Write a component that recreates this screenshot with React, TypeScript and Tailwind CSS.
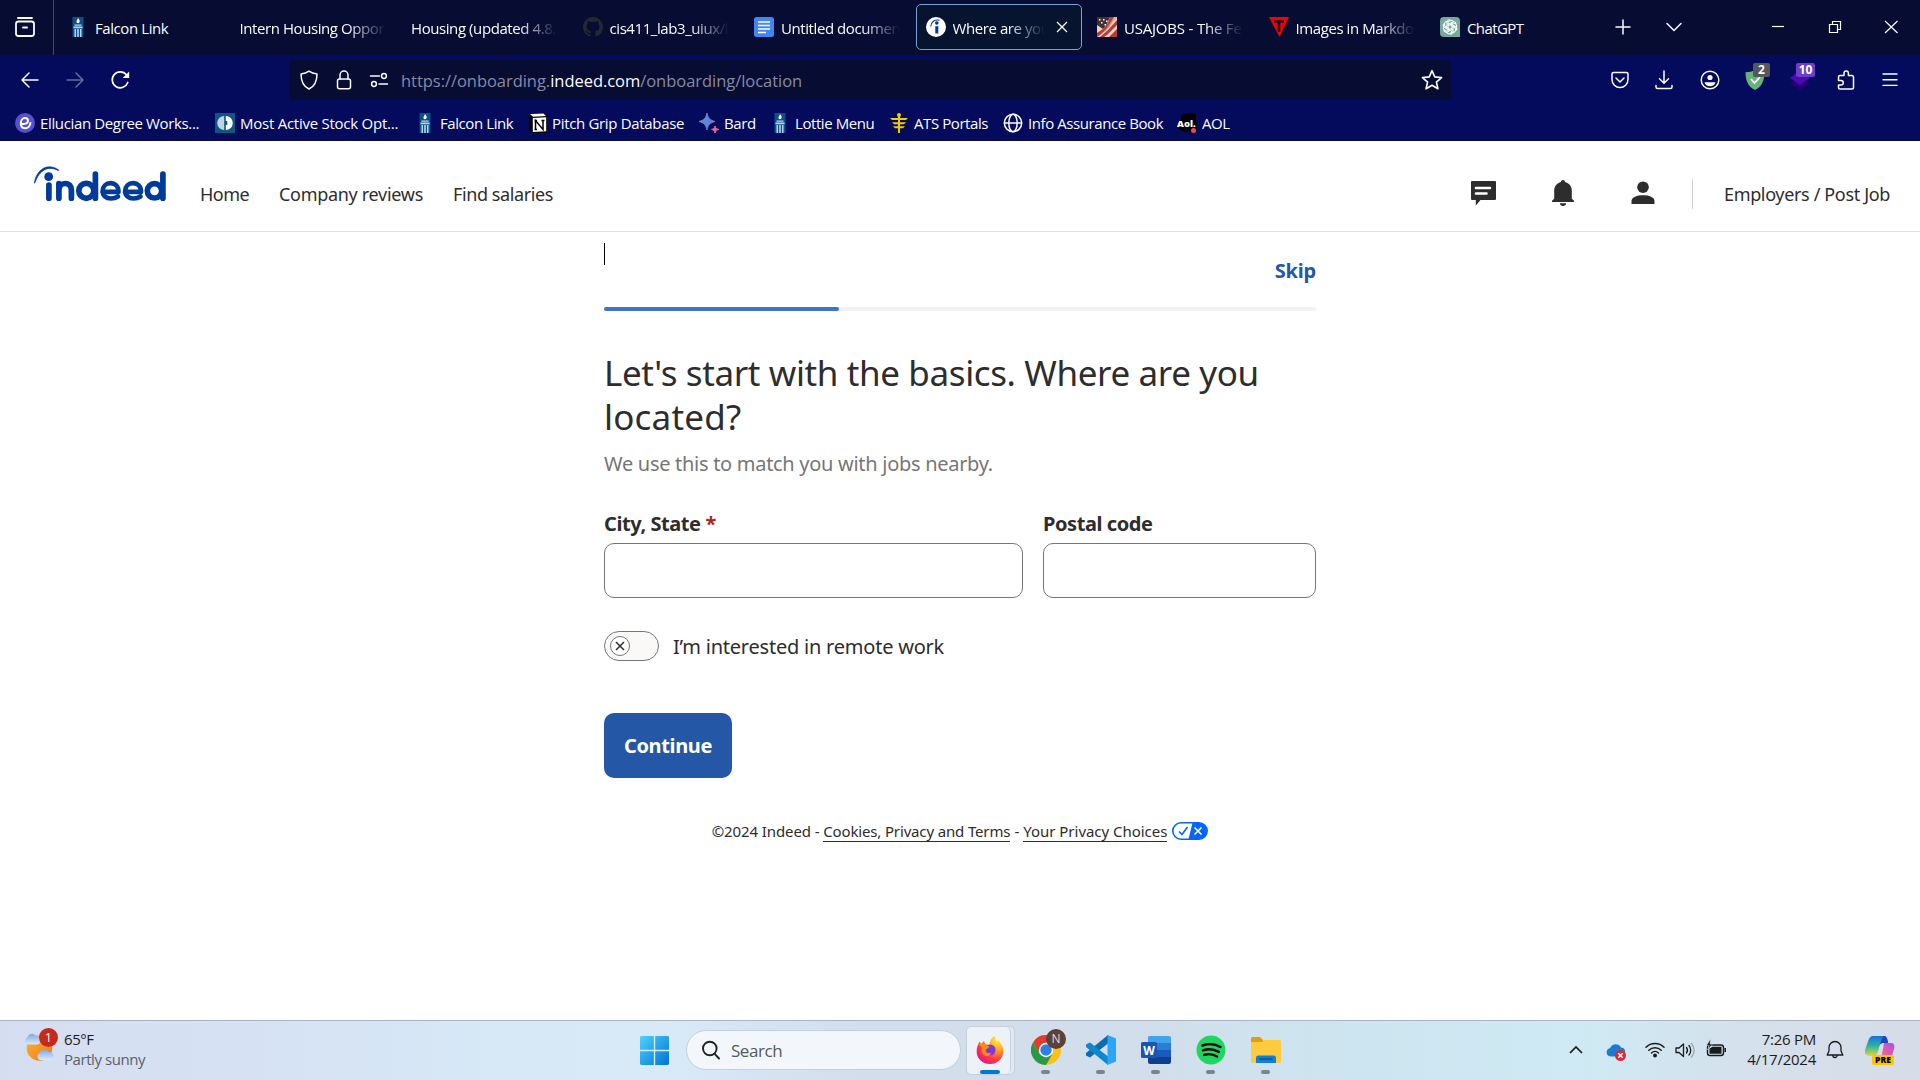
import React from "react";

const SEGOE = "font-['Open_Sans',sans-serif]";

function T({ className = "", children }: { className?: string; children: React.ReactNode }) {
  return <span className={"whitespace-nowrap " + className}>{children}</span>;
}

const Torch = () => (
  <svg viewBox="0 0 20 20" className="size-5 shrink-0">
    <rect x="4.500" width="11" height="20" fill="#0d4f8b" />
    <path d="M10 1c1.600 2 2 3 1.500 4.300-.8 1.200-2.400 1.200-3 0C8 4 9.500 3 10 1z" fill="#fff" />
    <path d="M6.500 7.500h7v1.300h-7zM5.500 9.600h9v1.600h-9zM6.500 12H8v8H6.500zM9.200 12h1.600v8H9.200zM12 12h1.500v8H12z" fill="#b9d4ea" />
  </svg>
);
const Github = () => (
  <svg viewBox="0 0 16 16" className="size-5 shrink-0" fill="#24292f">
    <path d="M8 0C3.580 0 0 3.580 0 8c0 3.540 2.290 6.530 5.470 7.590.4.070.55-.17.55-.38 0-.19-.01-.82-.01-1.490-2.010.37-2.530-.49-2.690-.94-.09-.23-.48-.94-.82-1.130-.28-.15-.68-.52-.01-.53.63-.01 1.080.58 1.230.82.72 1.210 1.870.87 2.330.66.07-.52.28-.87.51-1.070-1.780-.2-3.640-.89-3.640-3.950 0-.87.31-1.590.82-2.150-.08-.2-.36-1.020.08-2.120 0 0 .67-.21 2.200.82.64-.18 1.320-.27 2-.27s1.360.09 2 .27c1.530-1.040 2.200-.82 2.200-.82.44 1.100.16 1.920.08 2.120.51.56.82 1.270.82 2.150 0 3.070-1.870 3.750-3.650 3.950.29.25.54.73.54 1.480 0 1.070-.01 1.930-.01 2.200 0 .21.15.46.55.38A8.010 8.010 0 0 0 16 8c0-4.420-3.580-8-8-8z" />
  </svg>
);
const Docs = () => (
  <svg viewBox="0 0 20 20" className="size-5 shrink-0">
    <rect width="20" height="20" rx="2.500" fill="#4285f4" />
    <path d="M4 5h12M4 8.500h12M4 12h12M4 15.500h8" stroke="#fff" strokeWidth="1.700" />
  </svg>
);
const IndeedFav = () => (
  <svg viewBox="0 0 20 20" className="size-5 shrink-0">
    <circle cx="10" cy="10" r="10" fill="#fff" />
    <circle cx="10.800" cy="6" r="1.800" fill="#003a9b" />
    <path d="M9.300 9.200c1 .3 2 .2 3-.3V16.500H9.300z" fill="#003a9b" />
    <path d="M4.800 9.500C5 5 8.500 2 13.500 3.300" stroke="#003a9b" strokeWidth="1.100" fill="none" />
  </svg>
);
const Usa = () => (
  <svg viewBox="0 0 20 20" className="size-5 shrink-0">
    <rect width="20" height="20" fill="#ecd5bd" />
    <path d="M0 0h13l-3 7-4 5-6-4z" fill="#453034" />
    <path d="M13 0h4l-5 10-9 8-3 2v-4l6-4 5-6zM20 3v5L10 18l-3 2H3l8-7zM20 12v8h-8z" fill="#b8383d" />
    <path d="M17 0h3L9 14l-3 2z" fill="#c99c87" opacity=".7" />
    <path d="M2 2h1.500v1.500H2zM6 2h1.500v1.500H6zM4 5h1.500v1.500H4zM9 3.500h1.500V5H9zM7.500 7H9v1.500H7.500z" fill="#fff" />
  </svg>
);
const Tutorials = () => (
  <svg viewBox="0 0 20 20" className="size-5 shrink-0">
    <path d="M0 0h20l-9.500 20z" fill="#f50000" />
    <path d="M5 3.200h10v2.600h-3.700V15H8.700V5.800H5z" fill="#160a2c" />
  </svg>
);
const ChatGPT = () => (
  <svg viewBox="0 0 20 20" className="size-5 shrink-0">
    <path d="M4 0h12a4 4 0 0 1 4 4v16H4a4 4 0 0 1-4-4V4a4 4 0 0 1 4-4z" fill="#74aa9c" />
    <g stroke="#fff" strokeWidth="1.050" fill="none">
      {[0, 60, 120, 180, 240, 300].map((a) => (
        <path key={a} transform={`rotate(${a} 10 10)`} d="M8 11.200V6.300a3 3 0 0 1 5.500-1.600M8 7.600l4.200-2.400a3 3 0 0 1 4 1.200" />
      ))}
    </g>
  </svg>
);

function Tab({ icon, children, active }: { icon?: React.ReactNode; children: React.ReactNode; active?: boolean }) {
  return (
    <div className={"flex h-[46px] w-[166px] shrink-0 items-center gap-[7px] rounded-[5px] border px-[9px] " + (active ? "border-[#7f9edb] bg-[#07142f]" : "border-transparent")}>
      {icon}
      <div className="min-w-0 flex-1 pt-px text-[15px] leading-[22px] tracking-[-0.42px] text-[#fbfbfe]">{children}</div>
      {active && (
        <svg viewBox="0 0 20 20" className="size-5 shrink-0" stroke="#fbfbfe" strokeWidth="1.300"><path d="M5 5l10 10M15 5L5 15" /></svg>
      )}
    </div>
  );
}
const FADE = "block [mask-image:linear-gradient(to_right,#000_calc(100%-38px),transparent)]";

const Ico = ({ children, className = "size-5" }: { children: React.ReactNode; className?: string }) => (
  <svg viewBox="0 0 20 20" className={"shrink-0 " + className} fill="none" stroke="#fbfbfe" strokeWidth="1.500" strokeLinecap="round" strokeLinejoin="round">{children}</svg>
);

function Browser() {
  return (
    <div className={"flex h-[141px] flex-col border-b border-[#0a0d3a] bg-[#040b5c] " + SEGOE}>
      <div className="flex h-[55px] items-center bg-[#070c32]">
        <div className="flex h-full w-[54px] items-center border-r border-[#474a66] pl-[14px]">
          <svg viewBox="0 0 22 22" className="size-[22px]" fill="none" stroke="#fbfbfe" strokeWidth="1.800" strokeLinecap="round"><path d="M4 2h14" /><rect x="2" y="5.500" width="18" height="14.500" rx="2.500" /><path d="M9 11.500h4" /></svg>
        </div>
        <div className="ml-1 flex gap-[5.500px]">
          <Tab icon={<Torch />}><T>Falcon Link</T></Tab>
          <Tab><div className={FADE}><T>Intern Housing Oppor</T></div></Tab>
          <Tab><div className={FADE}><T>Housing (updated 4.8.</T></div></Tab>
          <Tab icon={<Github />}><div className={FADE}><T>cis411_lab3_uiux/l</T></div></Tab>
          <Tab icon={<Docs />}><div className={FADE}><T>Untitled documen</T></div></Tab>
          <Tab icon={<IndeedFav />} active><div className={FADE}><T>Where are you</T></div></Tab>
          <Tab icon={<Usa />}><div className={FADE}><T className="tracking-[-0.2px]">USAJOBS - The Fe</T></div></Tab>
          <Tab icon={<Tutorials />}><div className={FADE}><T>Images in Markdo</T></div></Tab>
          <Tab icon={<ChatGPT />}><T className="tracking-[-0.6px]">ChatGPT</T></Tab>
        </div>
        <div className="ml-auto flex items-center">
          <Ico className="mr-[31px] size-5"><path d="M10 3v14M3 10h14" /></Ico>
          <Ico className="mr-[84px] size-5"><path d="M3 6.500l7 7 7-7" /></Ico>
          <svg viewBox="0 0 20 20" className="mr-[37px] size-5" fill="none" stroke="#fff" strokeWidth="1.200"><path d="M4 9.500h12" /></svg>
          <svg viewBox="0 0 20 20" className="mr-[36px] size-5" fill="none" stroke="#fff" strokeWidth="1.200"><path d="M4.500 7.500h8v8h-8zM7.500 7.500v-3h8v8h-3" /></svg>
          <svg viewBox="0 0 20 20" className="mr-[19px] size-5" fill="none" stroke="#fff" strokeWidth="1.200"><path d="M4 4l12.500 12M16.500 4L4 16" /></svg>
        </div>
      </div>

      <div className="flex h-[51px] items-center pl-5 pt-px">
        <Ico className="size-5"><path d="M18 10H2M9 3l-7 7 7 7" /></Ico>
        <Ico className="ml-[25px] size-5 opacity-40"><path d="M2 10h16M11 3l7 7-7 7" /></Ico>
        <svg viewBox="0 0 20 20" className="ml-[25px] size-5" fill="none" stroke="#fbfbfe" strokeWidth="1.700" strokeLinecap="round"><path d="M17.800 12.500A8 8 0 1 1 16.500 4.800" /><path d="M19.200 1.500v6.500h-6.500z" fill="#fbfbfe" stroke="none" /></svg>
        <div className="mb-px ml-[159px] flex h-[40px] w-[1162px] items-center rounded-[5px] bg-[#070c32] pl-[10px] pr-[8px]">
          <Ico><path d="M10 1.200c2.500 1.800 5 2.500 8 2.800 0 7-2.500 12.500-8 15-5.500-2.500-8-8-8-15 3-.3 5.500-1 8-2.800z" /></Ico>
          <Ico className="ml-[15px] size-5"><rect x="3.500" y="9" width="13" height="9.700" rx="2" /><path d="M6 9V5a4 4 0 0 1 8 0v4" /></Ico>
          <Ico className="ml-[15px] size-5"><path d="M1.500 6h9M10 14h8.500" /><circle cx="15" cy="6" r="2.400" /><circle cx="5" cy="14" r="2.400" /></Ico>
          <T className="ml-[12px] pt-[3px] text-[16.500px] tracking-[-0.04px] text-[#868aa3]">https://onboarding.<span className="text-[#fbfbfe]">indeed.com</span>/onboarding/location</T>
          <Ico className="ml-auto size-[22px]"><path d="M10 1.500l2.500 5.700 6.200.6-4.700 4.100 1.400 6.100L10 14.800 4.600 18 6 11.900 1.300 7.800l6.200-.6z" /></Ico>
        </div>
        <Ico className="ml-[159px] size-5"><path d="M3.500 2.500h13a1.500 1.500 0 0 1 1.500 1.500v5.500a8 8 0 0 1-16 0V4a1.500 1.500 0 0 1 1.500-1.500zM6 8l4 4 4-4" /></Ico>
        <Ico className="ml-[24px] size-5"><path d="M10 1v12M5.500 8.800L10 13.200l4.500-4.400M2 15.500v1.500a1.500 1.500 0 0 0 1.500 1.500h13A1.500 1.500 0 0 0 18 17v-1.500" /></Ico>
        <Ico className="ml-[26px] size-5"><circle cx="10" cy="10" r="8.800" /><circle cx="10" cy="7.500" r="2.600" fill="#fbfbfe" stroke="none" /><path d="M4.500 12.300h11c-.6 2.700-3 4-5.500 4s-5-1.300-5.500-4z" fill="#fbfbfe" stroke="none" /></Ico>
        <div className="relative ml-[25px] size-5">
          <svg viewBox="0 0 20 20" className="size-5"><path d="M10 0c2.800 1.500 6 2.200 9.500 2.200C19.500 11 16.500 17 10 20 3.500 17 .5 11 .5 2.200 4 2.200 7.200 1.500 10 0z" fill="#67b279" /><path d="M6 9l3.500 4L15 7" stroke="#fff" strokeWidth="1.800" fill="none" /></svg>
          <div className="absolute left-[8px] top-[-7px] flex h-[14px] w-[17px] items-center justify-center rounded-[2px] bg-[#55585a] text-[12px] font-bold text-white">2</div>
        </div>
        <div className="relative ml-[25px] size-5">
          <svg viewBox="0 0 20 20" className="size-5"><path d="M10 6l10 7.500-10 6.500L0 13.500z" fill="#250078" /><path d="M10 0l10 8-10 7L0 8z" fill="#4a0ab5" /></svg>
          <div className="absolute left-[6px] top-[-7px] flex h-[14px] w-[19px] items-center justify-center rounded-[2px] bg-[#6f3ec4] text-[12px] font-bold text-white">10</div>
        </div>
        <Ico className="ml-[26px] size-5"><path d="M2.500 8.500V7A1.500 1.500 0 0 1 4 5.500h4V3.300a2.200 2.200 0 0 1 4.400 0v2.200h3.400A1.700 1.700 0 0 1 17.500 7v10.500A1.500 1.500 0 0 1 16 19H4a1.500 1.500 0 0 1-1.500-1.500V15H5a2 2 0 0 0 0-4.500H2.500z" /></Ico>
        <Ico className="ml-[24px] size-5"><path d="M3 4h14M3 9.700h14M3 15.400h14" strokeWidth="1.400" /></Ico>
      </div>

      <div className="flex h-[35px] items-center pl-[15px] text-[15px] tracking-[-0.42px] text-[#fbfbfe] [&>span]:pt-px">
        <svg viewBox="0 0 20 20" className="mr-[5px] size-5"><circle cx="10" cy="10" r="10" fill="#5551cf" /><path d="M6.500 11c4 .5 6.500-1 6.500-3.300C13 5.800 11.500 5 10 5c-2.500 0-4.200 2.500-4.200 5.300 0 3 1.700 4.900 4.200 4.900 3 0 5.400-2.400 5.400-6" stroke="#fff" strokeWidth="2" fill="none" /></svg>
        <T className="w-[159px] tracking-[-0.36px]">Ellucian Degree Works...</T>
        <svg viewBox="0 0 20 20" className="ml-4 mr-[5px] size-5"><rect width="20" height="20" fill="#0f5687" /><path d="M9.200 3a7 7 0 0 0 0 14z" fill="#bcd6e6" /><path d="M10.800 3a7 7 0 0 1 0 14V12h1.500V8h-1.500z" fill="#fff" /></svg>
        <T className="w-[158px] tracking-[-0.25px]">Most Active Stock Opt...</T>
        <span className="ml-[17px] mr-[5px]"><Torch /></span>
        <T className="w-[73px]">Falcon Link</T>
        <svg viewBox="0 0 20 20" className="ml-[15px] mr-[4px] size-5"><path d="M2 0h14l3 3v17H5l-4-4V1z" fill="#000" /><path d="M2 1l13.500-.5L18 3 5 3.800zM4.800 5l13.400-.8v14L4.800 19z" fill="#fff" /><path d="M7.500 16.500v-9l7.500 9v-9M6.500 7.500h2.500M13.500 7.500h3M6.500 16.500h2.500" stroke="#000" strokeWidth="1.500" fill="none" /></svg>
        <T className="w-[132px] tracking-[-0.33px]">Pitch Grip Database</T>
        <svg viewBox="0 0 20 20" className="ml-[15px] mr-[5px] size-5"><defs><linearGradient id="bd" x1="0" x2="1" y1="0" y2=".4"><stop offset="0" stopColor="#d96570" /><stop offset=".55" stopColor="#4a8fe0" /><stop offset="1" stopColor="#9168c0" /></linearGradient></defs><path d="M8 0c1 5 3 7.200 8 8.500-5 1.300-7 3.500-8 8.500-1-5-3-7.200-8-8.500C5 7.200 7 5 8 0z" fill="url(#bd)" stroke="url(#bd)" strokeWidth="1" /><path d="M16 13c.5 2 1.500 3 4 3.500-2.500.5-3.500 1.500-4 3.500-.5-2-1.500-3-3.500-3.500 2-.5 3-1.500 3.500-3.500z" fill="#d96590" stroke="#d96590" /></svg>
        <T className="w-[31px]">Bard</T>
        <span className="ml-[15px] mr-[5px]"><Torch /></span>
        <T className="w-[79px]">Lottie Menu</T>
        <svg viewBox="0 0 20 20" className="ml-[15px] mr-[5px] size-5" fill="#f2cb05"><path d="M9 3h2v17H9zM1 5h18l-2 2H3zM3 9.200h14l-2 2H5zM4 13.200h12l-2 2H6z" /><circle cx="10" cy="2" r="2" /></svg>
        <T className="w-[73px]">ATS Portals</T>
        <svg viewBox="0 0 20 20" className="ml-[16px] mr-[5px] size-5" fill="none" stroke="#fbfbfe" strokeWidth="1.500"><circle cx="10" cy="10" r="8.700" /><ellipse cx="10" cy="10" rx="4.200" ry="8.700" /><path d="M1.300 10h17.400" /></svg>
        <T className="w-[134px]">Info Assurance Book</T>
        <svg viewBox="0 0 20 20" className="ml-[15px] mr-[5px] size-5 tracking-normal"><path d="M5 1.500L18.500 0 20 17 9 19.500 1.500 16z" fill="#000" /><circle cx="16.500" cy="17.500" r="2.500" fill="#f5484f" /><text x="0" y="13.500" fontSize="9.500" fontWeight="800" fill="#fff">Aol.</text></svg>
        <T className="w-[28px]">AOL</T>
      </div>
    </div>
  );
}

function SiteHeader() {
  return (
    <header className="flex h-[91px] items-start border-b border-[#e1e1e1] pl-[33px] text-[18px] leading-6 text-[#2d2d2d]">
      <svg viewBox="0 0 134 38" className="mt-[23px] h-[38px] w-[134px]" role="img" aria-label="indeed">
        <g fill="none" stroke="#003a9b" strokeWidth="5.700" strokeLinecap="round">
          <path d="M15.900 21V34.200" />
          <path d="M25.900 34.200V19.500M25.900 26.500c0-4.800 2.600-7 6.200-7s6.300 2.200 6.300 6.500v8.200" />
          <circle cx="53.300" cy="26.800" r="7.500" />
          <path d="M62.400 10V34.200" />
          <path d="M69.500 27.900H85.500C85.500 22 82 19.200 77.700 19.200c-4.700 0-8 3.200-8 7.800 0 4.800 3.400 7.500 8.300 7.500 2.800 0 5-.7 7-2" strokeWidth="4.700" strokeLinejoin="round" />
          <path d="M92 27.900H108C108 22 104.500 19.200 100.200 19.200c-4.700 0-8 3.200-8 7.800 0 4.800 3.400 7.500 8.300 7.500 2.800 0 5-.7 7-2" strokeWidth="4.700" strokeLinejoin="round" />
          <circle cx="121.500" cy="26.800" r="7.200" />
          <path d="M129.900 10V34.200" />
        </g>
        <circle cx="15.700" cy="12.700" r="4.400" fill="#003a9b" />
        <path d="M1.300 19C3.500 5 15-1.500 25.500 5.800c.7.600.2 1-.5.600C16 1.700 6.500 5 2 18.800z" fill="#003a9b" stroke="#003a9b" strokeWidth=".6" />
      </svg>
      <T className="ml-[33px] mt-[41px] w-[49px] tracking-[-0.55px]">Home</T>
      <T className="ml-[30px] mt-[41px] w-[144px] tracking-[-0.3px]">Company reviews</T>
      <T className="ml-[30px] mt-[41px] tracking-[-0.4px]">Find salaries</T>
      <div className="ml-auto flex">
        <svg viewBox="0 0 25 25" className="mt-[40px] h-[25px] w-[25px]"><path d="M1 0h23a1 1 0 0 1 1 1v17a1 1 0 0 1-1 1H9.500L4.800 24.500V19H1a1 1 0 0 1-1-1V1a1 1 0 0 1 1-1z" fill="#2d2d2d" /><path d="M5 7h14M5 12.500h10.500" stroke="#fff" strokeWidth="2.500" strokeLinecap="round" /></svg>
        <svg viewBox="0 0 24 26" className="ml-[55px] mt-[39px] h-[26px] w-[24px]" fill="#2d2d2d"><path d="M12 0c1.200 0 2 .8 2 1.900 4 1 6.800 4.100 6.800 8.600v8.300L23 20.800V22H1v-1.200l2.200-2V10.500C3.200 6 6 2.900 10 1.900 10 .8 10.800 0 12 0zM8.800 23.200h6.400C15 25 13.700 26 12 26s-3-1-3.200-2.800z" /></svg>
        <svg viewBox="0 0 24 24" className="ml-[56px] mt-[40px] h-6 w-6" fill="#2d2d2d"><circle cx="12" cy="6.200" r="5.800" /><path d="M.5 23v-3C.5 16 6 14.200 12 14.200s11.500 1.800 11.500 5.800v3z" /></svg>
        <div className="ml-[37px] mt-[38px] h-[30px] w-px bg-[#d0d0d0]" />
        <T className="ml-[31px] mr-[30px] mt-[41px] w-[166px] tracking-[-0.35px]">Employers / Post Job</T>
      </div>
    </header>
  );
}

function Form() {
  return (
    <main className="mx-auto w-[712px] flex-1 text-[#2d2d2d]">
      <div className="flex h-[75px] justify-between">
        <div className="mt-[11px] h-[22px] w-px bg-black" />
        <T className="mt-[25px] text-[20px] font-bold leading-[28px] tracking-[-0.2px] text-[#2557a7]">Skip</T>
      </div>
      <div className="h-1 rounded-full bg-[#f2f2f2]"><div className="h-1 w-[235px] rounded-full bg-[#3f73d3]" /></div>
      <h1 className="mt-[40px] text-[35px] leading-[44px]"><T className="tracking-[-0.38px]">Let's start with the basics. Where are you</T><br /><T className="tracking-[0.2px]">located?</T></h1>
      <p className="mt-[10px] text-[20px] leading-[30px] tracking-[-0.29px] text-[#767676]">We use this to match you with jobs nearby.</p>
      <div className="mt-[31px] flex gap-5 text-[20px] font-bold leading-[28px] tracking-[-0.43px]">
        <div>
          <div className="flex"><T>City, State</T><span className="ml-[5px] text-[#a9252b]">*</span></div>
          <div className="mt-[5px] h-[55px] w-[419px] rounded-[10px] border border-[#767676]" />
        </div>
        <div>
          <div className="flex"><T>Postal code</T></div>
          <div className="mt-[5px] h-[55px] w-[273px] rounded-[10px] border border-[#767676]" />
        </div>
      </div>
      <div className="mt-[33px] flex h-[30px] items-center">
        <div className="flex h-[30px] w-[55px] items-center rounded-full border border-[#767676] bg-[#faf9f8] pl-[5px]">
          <svg viewBox="0 0 20 20" className="size-5"><circle cx="10" cy="10" r="9.500" fill="#fff" stroke="#767676" /><path d="M6 6l8 8M14 6l-8 8" stroke="#2d2d2d" strokeWidth="1.500" /></svg>
        </div>
        <T className="ml-[14px] pt-px text-[20px] tracking-[-0.22px]">I’m interested in remote work</T>
      </div>
      <button className="mt-[52px] flex h-[65px] w-[128px] items-center justify-center rounded-[10px] bg-[#2557a7] pt-px text-[20px] font-bold tracking-[-0.37px] text-white">Continue</button>
      <footer className="mt-[41px] flex h-[24px] items-center justify-center text-[15px] leading-[20px]">
        <T className="tracking-[-0.1px]">©2024 Indeed -&nbsp;</T>
        <T className="border-b border-[#2d2d2d] tracking-[-0.15px]">Cookies, Privacy and Terms</T>
        <span className="w-[13px] text-center">-</span>
        <T className="border-b border-[#2d2d2d] tracking-[-0.03px]">Your Privacy Choices</T>
        <svg viewBox="0 0 36 18" className="ml-[5px] h-[18px] w-[36px]"><rect x=".8" y=".8" width="34.400" height="16.400" rx="8.200" fill="#fff" stroke="#06f" strokeWidth="1.600" /><path d="M20.500 1H27a8 8 0 0 1 0 16H16.500z" fill="#06f" /><path d="M7 9.500l3 3 5.500-7.500" fill="none" stroke="#06f" strokeWidth="1.600" /><path d="M22.500 5.500l7 7M29.500 5.500l-7 7" stroke="#fff" strokeWidth="1.600" /></svg>
      </footer>
    </main>
  );
}

const TaskApp = ({ children, className = "" }: { children: React.ReactNode; className?: string }) => (
  <div className={"relative flex h-[48px] w-[55px] flex-col items-center pt-[9px] " + className}>
    {children}
    <div className="mt-[5px] h-1 w-[9px] rounded-full bg-[#7b838b]" />
  </div>
);

function Taskbar() {
  return (
    <div className={"flex h-[60px] border-t border-[#a9b5c2] bg-[linear-gradient(90deg,#d5def1_0%,#d6e2f3_12%,#d6e7f6_24%,#d8e9f7_35%,#d3deec_45%,#d2deeb_60%,#cde4ef_68%,#cfeaf4_82%,#d5e0eb_92%,#d6dce8_100%)] " + SEGOE}>
      <div className="flex w-[639px] pl-[24px] pt-[9px]">
        <div className="relative h-[40px] w-[40px]">
          <svg viewBox="0 0 34 34" className="size-[34px]"><defs><linearGradient id="sun" x1="0" x2="1" y1="0" y2="1"><stop offset="0" stopColor="#ffb52b" /><stop offset="1" stopColor="#f0781e" /></linearGradient><linearGradient id="cl" x1="0" x2="0" y1="0" y2="1"><stop offset="0" stopColor="#7fa6e6" /><stop offset="1" stopColor="#dbe9fc" /></linearGradient></defs><circle cx="15.500" cy="18" r="12.800" fill="url(#sun)" /><path d="M4 14.500a4 4 0 0 1-.5-7.500C5 2.500 11 3 12.500 6.500c3 0 4 2 4 4s-1.500 4-3.500 4z" fill="url(#cl)" /><path d="M16 30a4 4 0 0 1 0-7.500c1.500-4.500 7.500-4 8.500-.5 3.500 0 5 2 5 4s-1.500 4-4 4z" fill="url(#cl)" /></svg>
          <div className="absolute left-[15px] top-[-2px] flex size-[19px] items-center justify-center rounded-full bg-[#c42b1c] text-[12px] text-white">1</div>
        </div>
        <div className="-mt-px flex flex-col text-[15px] leading-[20px] tracking-[-0.44px]"><T className="text-[#1b1b1b]">65°F</T><T className="text-[#5b6068]">Partly sunny</T></div>
      </div>
      <div className="flex pt-[5px]">
        <svg viewBox="0 0 30 30" className="ml-px mt-[10px] size-[29px]"><defs><linearGradient id="win" x1="0" x2="1" y1="0" y2="1"><stop offset="0" stopColor="#4fd3fb" /><stop offset="1" stopColor="#0072d6" /></linearGradient></defs><path d="M1.500 0h12.800v14.300H0V1.500A1.500 1.500 0 0 1 1.500 0zM15.700 0h12.800A1.500 1.500 0 0 1 30 1.500v12.800H15.700zM0 15.700h14.300V30H1.500A1.500 1.500 0 0 1 0 28.500zM15.700 15.700H30v12.800a1.500 1.500 0 0 1-1.500 1.500H15.700z" fill="url(#win)" /></svg>
        <div className="ml-[17px] mt-[4px] flex h-[40px] w-[275px] items-center rounded-full border border-[#c3cfdc] bg-[#f3f7fb] pl-[14px]">
          <svg viewBox="0 0 20 20" className="size-5" fill="none" stroke="#222" strokeWidth="1.900" strokeLinecap="round"><circle cx="8.800" cy="8.500" r="6.800" /><path d="M13.500 13.700l4.500 4.800" /></svg>
          <T className="ml-[10px] pt-px text-[17px] tracking-[-0.45px] text-[#555a60]">Search</T>
        </div>
        <div className="ml-[5px] h-[49px] w-[49px] rounded-[5px] border border-[#c6d0dc] bg-[#e2e9f1]">
          <div className="flex h-[47px] w-[44px] flex-col items-center rounded-[5px] border-r border-[#c6d0dc] bg-[#edf1f8] pl-[3px] pt-[9px]">
            <svg viewBox="0 0 30 30" className="size-[28px]"><defs><radialGradient id="ff" cx=".8" cy=".1" r="1"><stop offset="0" stopColor="#fff44f" /><stop offset=".4" stopColor="#ffa41e" /><stop offset=".75" stopColor="#ff3647" /><stop offset="1" stopColor="#e31587" /></radialGradient></defs><path d="M19.500 0c2 2.500 2.500 4.500 3 6.500 1-1 1.200-1.500 1.200-2.500C27 8 29.500 12 29.300 16.500 29 24.500 22.500 30 15 30S.700 24.500.700 16.500C.7 13 1.700 9.500 4 6l1.500 3 3-4c.4 2 1.500 3.500 3 4h3C14.500 5.500 16.500 2.500 19.500 0z" fill="url(#ff)" /><circle cx="15" cy="15" r="6" fill="#7a3bd6" /><path d="M2 9c3-1.500 7-1.500 10 1.500 1 .5 2 .5 2.500 1-1 2-3.500 1.500-4 3.500-.3 3 2 4 5 3 1 2.500-3 4.500-6 3S5 17 7 12z" fill="#ff8a16" /></svg>
            <div className="mt-[6px] h-1 w-5 shrink-0 rounded-full bg-[#0078d4]" />
          </div>
        </div>
        <TaskApp className="ml-[3px]">
          <svg viewBox="0 0 30 30" className="size-[30px]"><circle cx="15" cy="15" r="15" fill="#fbc116" /><path d="M2 7.500A15 15 0 0 1 28 7.500H15L8.500 18.700z" fill="#e33b2e" /><path d="M2 7.500L8.500 18.700 15 22.500 21.500 18.700 15 30A15 15 0 0 1 2 7.500z" fill="#269a48" /><circle cx="15" cy="15" r="7.200" fill="#fff" /><circle cx="15" cy="15" r="5.700" fill="#2f7de9" /></svg>
          <div className="absolute left-[28px] top-[3px] flex size-5 items-center justify-center rounded-full bg-[#5d4037] text-[12px] text-[#e6dcd8]">N</div>
        </TaskApp>
        <TaskApp><svg viewBox="0 0 30 30" className="size-[30px]"><path d="M22 0v8.500L4 22.500 0 20.500v-2.500z" fill="#0b6cb0" /><path d="M0 9.500L4 7.500 22 21.500V30L0 12z" fill="#0e87d0" /><path d="M21.500 0L30 3.500v23L21.500 30z" fill="#2ba6f5" /></svg></TaskApp>
        <TaskApp><svg viewBox="0 0 30 30" className="size-[30px]"><path d="M8 1h20a2 2 0 0 1 2 2v5H7V2z" fill="#41a5ee" /><path d="M7 8h23v7H7z" fill="#2b7cd3" /><path d="M7 15h23v7H7z" fill="#185abd" /><path d="M7 22h23v5a2 2 0 0 1-2 2H9a2 2 0 0 1-2-2z" fill="#103f91" /><rect y="7" width="16" height="16" rx="1.500" fill="#1a55b0" /><text x="8" y="19.500" textAnchor="middle" fontSize="12" fontWeight="700" fill="#fff">W</text></svg></TaskApp>
        <TaskApp><svg viewBox="0 0 30 30" className="size-[30px]"><circle cx="15" cy="15" r="14.500" fill="#1ed760" /><path d="M6.500 10.500c6-2 13-1.500 18 1.500M7 15.300c5-1.600 11-1 15.800 1.600M8 19.900c4-1.200 9-.8 13 1.600" stroke="#000" strokeWidth="2.400" strokeLinecap="round" fill="none" /></svg></TaskApp>
        <TaskApp><svg viewBox="0 0 30 30" className="size-[30px]"><path d="M0 3.500A1.500 1.500 0 0 1 1.500 2H9l3 3v4H0z" fill="#e29d0e" /><path d="M0 7h11l2-2h15.500A1.500 1.500 0 0 1 30 6.500v20a1.500 1.500 0 0 1-1.500 1.500h-27A1.500 1.500 0 0 1 0 26.500z" fill="#fecb3e" /><path d="M5 28v-5a2.500 2.500 0 0 1 2.500-2.500h15A2.500 2.500 0 0 1 25 23v5z" fill="#1180d4" /><path d="M9 24h12" stroke="#0a5396" strokeWidth="1.500" strokeLinecap="round" /></svg></TaskApp>
      </div>
      <div className="ml-auto flex items-start text-[#1b1b1b]">
        <svg viewBox="0 0 20 20" className="mt-[19px] size-5" fill="none" stroke="#1b1b1b" strokeWidth="1.700"><path d="M4 13l6-6 6 6" /></svg>
        <svg viewBox="0 0 22 20" className="ml-[20px] mt-[21px] h-5 w-[22px]"><path d="M4.500 14.500a4.200 4.200 0 0 1-.5-8.300C6 1 13 1 15 5.500c3.500 0 4.500 3 4 5.500-.5 2-2 3.500-4 3.500z" fill="#1a7bd0" /><circle cx="14.500" cy="13.500" r="5.500" fill="#d92c35" /><path d="M12.300 11.300l4.400 4.400M16.700 11.300l-4.400 4.400" stroke="#fff" strokeWidth="1.400" /></svg>
        <svg viewBox="0 0 20 20" className="ml-[17px] mt-[19px] size-5" fill="none" stroke="#1b1b1b" strokeWidth="1.500" strokeLinecap="round"><path d="M1 7.200a13 13 0 0 1 18 0M3.800 10.200a9 9 0 0 1 12.400 0M6.500 13a5 5 0 0 1 7 0" /><circle cx="10" cy="15.500" r="1.200" fill="#1b1b1b" /></svg>
        <svg viewBox="0 0 20 20" className="ml-[10px] mt-[19px] size-5" fill="none" stroke="#1b1b1b" strokeWidth="1.300" strokeLinecap="round" strokeLinejoin="round"><path d="M1 8v4.500h3l4.500 4V4L4 8zM11.500 7.500c1.200 1.600 1.200 3.900 0 5.500M14 5.500c2.300 2.700 2.300 6.800 0 9.500" /><path d="M16.500 3.500c3.500 4 3.500 9.500 0 13.500" opacity=".3" /></svg>
        <svg viewBox="0 0 22 20" className="ml-[10px] mt-[18px] h-5 w-[22px]"><rect x="2.500" y="6" width="16" height="10.500" rx="2.500" fill="none" stroke="#1b1b1b" strokeWidth="1.400" /><path d="M4.500 9.500l3-1.700h9v7h-12zM19.500 9H21v4h-1.500z" fill="#1b1b1b" /><path d="M5.500 0L1.500 6.500h2.800L2.500 11l5-6H5z" fill="#1b1b1b" stroke="#d0e6f0" strokeWidth=".5" /></svg>
        <div className="ml-[10px] mt-[8px] flex w-[79px] flex-col items-end text-[15px] leading-[20px] tracking-[-0.25px]"><T>7:26 PM</T><T>4/17/2024</T></div>
        <svg viewBox="0 0 20 20" className="ml-[9px] mt-[19px] size-5" fill="none" stroke="#1b1b1b" strokeWidth="1.300" strokeLinejoin="round"><path d="M10 1.500a6 6 0 0 0-6 6V11l-1.800 4h15.600L16 11V7.500a6 6 0 0 0-6-6zM7.800 15.300a2.200 2.200 0 0 0 4.400 0" /></svg>
        <div className="relative ml-[20px] mr-[25px] mt-[15px] h-[30px] w-[30px]">
          <svg viewBox="0 0 30 28" className="h-[28px] w-[30px]"><defs><linearGradient id="cp1" x1="0" x2="0" y1="0" y2="1"><stop offset="0" stopColor="#1b6fe0" /><stop offset=".5" stopColor="#2cb5a0" /><stop offset="1" stopColor="#e8d53a" /></linearGradient><linearGradient id="cp2" x1="1" x2="0" y1="0" y2="1"><stop offset="0" stopColor="#a550e8" /><stop offset=".6" stopColor="#f0609a" /><stop offset="1" stopColor="#ff9a4a" /></linearGradient></defs><path d="M8 0h11c2 0 3 2 3.500 4l.7 3H18c-3 0-3.500 3-4.500 7-1 3-2 6-5 6H4c-3 0-5-2-4-6L3.500 4C4.500 1.500 6 0 8 0z" fill="url(#cp1)" /><path d="M19 7h7c3 0 4 2.500 3 6l-2 7c-1 4-3 6-6 6h-8c3 0 3-3 4-8z" fill="url(#cp2)" /><path d="M18 0h1.500c2 0 3 3 3.500 7h-5c-2 0-3 1-3.500 2z" fill="#2340c8" /></svg>
          <div className="absolute left-[7px] top-[19px] flex h-[10px] w-[22px] items-center justify-center rounded-[2px] bg-[#fdc500] text-[8.500px] font-extrabold leading-none text-black">PRE</div>
        </div>
      </div>
    </div>
  );
}

export default function App() {
  return (
    <div className="flex h-[1080px] w-[1920px] flex-col overflow-hidden bg-white font-['Noto_Sans',sans-serif]">
      <Browser />
      <SiteHeader />
      <Form />
      <Taskbar />
    </div>
  );
}
